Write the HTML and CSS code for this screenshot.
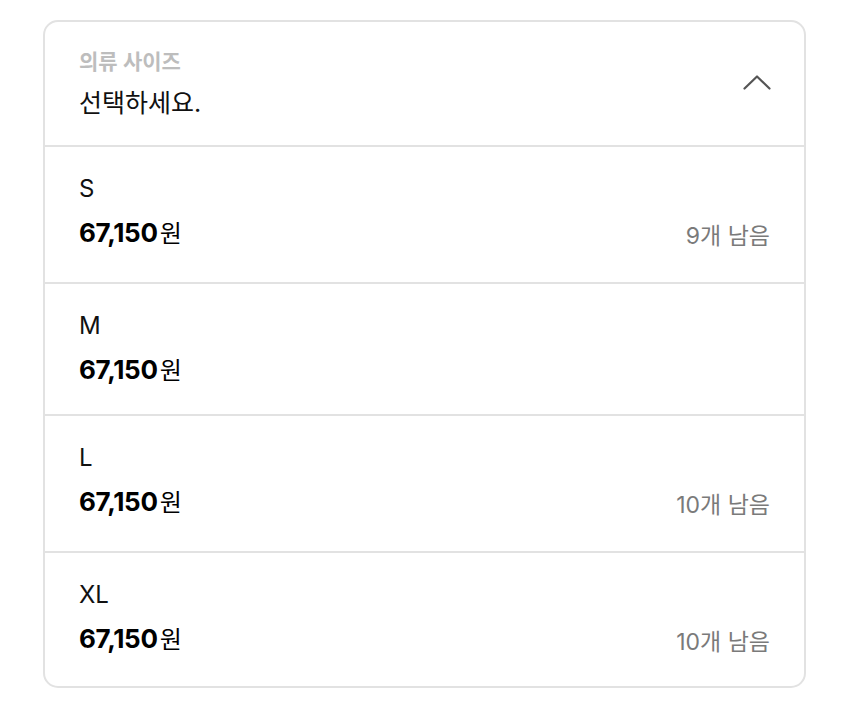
FILE: index.html
```html
<!DOCTYPE html>
<html lang="ko">
<head>
<meta charset="utf-8">
<link rel="stylesheet" href="styles.css">
</head>
<body>
<div class="card">
  <div class="header">
    <div class="header-text">
      <div class="label">의류 사이즈</div>
      <div class="title">선택하세요.</div>
    </div>
    <svg class="chevron" width="28" height="16" viewBox="0 0 28 16" aria-hidden="true">
      <polyline points="1.5,14.5 14,2.5 26.5,14.5" fill="none" stroke="#555" stroke-width="2.2" stroke-linecap="round" stroke-linejoin="round"/>
    </svg>
  </div>
  <div class="option">
    <div class="size">S</div>
    <div class="price-row">
      <div class="price"><b>67,150</b><span class="won">원</span></div>
      <div class="stock">9개 남음</div>
    </div>
  </div>
  <div class="option">
    <div class="size">M</div>
    <div class="price-row">
      <div class="price"><b>67,150</b><span class="won">원</span></div>
    </div>
  </div>
  <div class="option">
    <div class="size">L</div>
    <div class="price-row">
      <div class="price"><b>67,150</b><span class="won">원</span></div>
      <div class="stock">10개 남음</div>
    </div>
  </div>
  <div class="option">
    <div class="size">XL</div>
    <div class="price-row">
      <div class="price"><b>67,150</b><span class="won">원</span></div>
      <div class="stock">10개 남음</div>
    </div>
  </div>
</div>
</body>
</html>
```

FILE: styles.css
```css
* {
  box-sizing: border-box;
}

body {
  margin: 0;
  background: #ffffff;
  font-family: Inter, "Noto Sans CJK KR", sans-serif;
  color: #111111;
}

.card {
  margin: 20px 0 0 43px;
  width: 763px;
  border: 2px solid #e2e2e2;
  border-radius: 15px;
  overflow: hidden;
}

.header {
  display: flex;
  align-items: center;
  justify-content: space-between;
  padding: 27px 33px 26px 34px;
  border-bottom: 2px solid #e2e2e2;
}

.header-text {
  display: flex;
  flex-direction: column;
  gap: 12px;
}

.label {
  font-size: 21px;
  line-height: 26px;
  font-weight: 600;
  color: #bdbdbd;
}

.title {
  font-size: 25px;
  line-height: 32px;
  color: #111111;
}

.chevron {
  display: block;
  margin-top: -4px;
}

.option {
  padding: 26px 34px 27px 34px;
  border-bottom: 2px solid #e2e2e2;
  display: flex;
  flex-direction: column;
  gap: 12px;
}

.option:last-child {
  border-bottom: none;
  padding-bottom: 25px;
}

.size {
  font-size: 24px;
  line-height: 32px;
}

.price-row {
  display: flex;
  justify-content: space-between;
  align-items: flex-start;
}

.price {
  font-size: 26px;
  line-height: 32px;
  color: #000000;
}

.price b {
  font-weight: 700;
  letter-spacing: -0.3px;
}

.won {
  font-size: 24px;
  margin-left: 2px;
}

.stock {
  font-size: 23px;
  line-height: 38px;
  color: #7a7a7a;
}
```
